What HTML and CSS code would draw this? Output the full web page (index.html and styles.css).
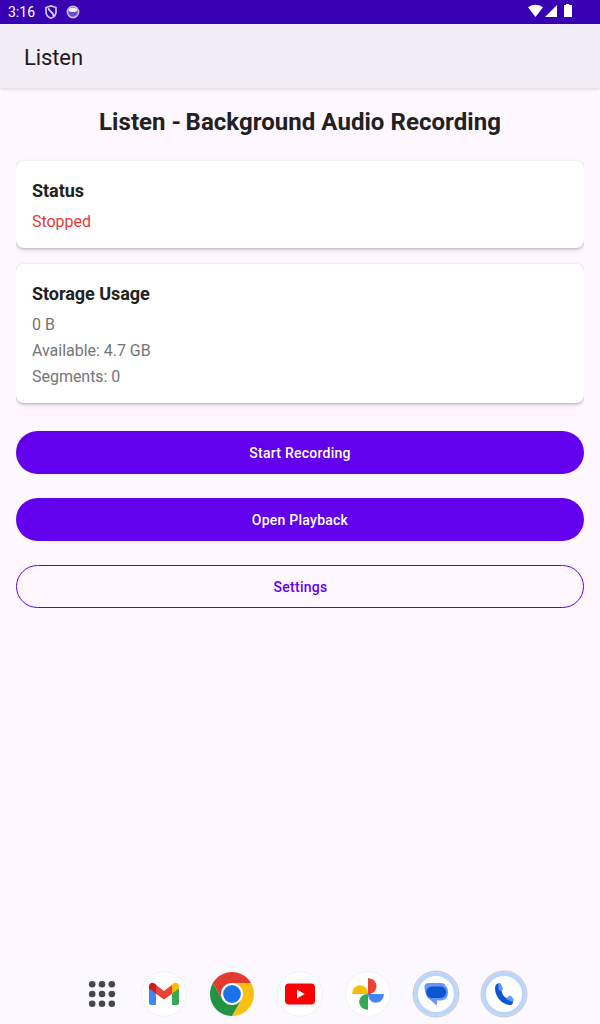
FILE: index.html
```
<!DOCTYPE html>
<html lang="en">
<head>
<meta charset="utf-8">
<title>Listen</title>
<link rel="stylesheet" href="styles.css">
</head>
<body>
<div class="screen">
  <header class="statusbar">
    <span class="clock">3:16</span>
    <svg class="shield" width="12" height="14" viewBox="0 0 12 14"><path d="M6 .9 11 2.500V7c0 2.900-2 5-5 6.200C3 12 1 9.900 1 7V2.500Z" fill="none" stroke="#d3c6ee" stroke-width="1.700"/><path d="M3.600 3C3 7 9 6.500 8.500 11" fill="none" stroke="#d3c6ee" stroke-width="2"/></svg>
    <svg class="face" width="14" height="14" viewBox="0 0 14 14"><circle cx="7" cy="7" r="5.600" fill="#6f4bc9" stroke="#c8b8eb" stroke-width="1.700"/><path d="M3 4Q7 1.500 11 4V6.200Q9 7.400 7 6.800 5 7.400 3 6.200Z" fill="#f4efff"/></svg>
    <svg class="signals" width="46" height="14" viewBox="0 0 46 14"><path d="M0 3.200Q7.500-1.600 15 3.200L7.500 13Z" fill="#fff"/><path d="M29 1V13H17Z" fill="#fff"/><path d="M36 1H38V0H41V1H44V13H36Z" fill="#fff"/></svg>
  </header>
  <div class="appbar">Listen</div>
  <main class="content">
    <h1 class="title">Listen <span class="dash">-</span> Background Audio Recording</h1>
    <div class="card-slot">
      <section class="card">
        <h2 class="card-title">Status</h2>
        <p class="line stopped">Stopped</p>
      </section>
    </div>
    <div class="card-slot">
      <section class="card">
        <h2 class="card-title">Storage Usage</h2>
        <p class="line">0 B</p>
        <p class="line">Available: 4.7 GB</p>
        <p class="line">Segments: 0</p>
      </section>
    </div>
    <div class="actions">
      <button class="btn">Start Recording</button>
      <button class="btn">Open Playback</button>
      <button class="btn outlined">Settings</button>
    </div>
  </main>
  <nav class="dock">
    <svg class="apps" width="28" height="28" viewBox="0 0 28 28" fill="#46464f"><circle cx="4.200" cy="4.200" r="3.300"/><circle cx="14" cy="4.200" r="3.300"/><circle cx="23.800" cy="4.200" r="3.300"/><circle cx="4.200" cy="14" r="3.300"/><circle cx="14" cy="14" r="3.300"/><circle cx="23.800" cy="14" r="3.300"/><circle cx="4.200" cy="23.800" r="3.300"/><circle cx="14" cy="23.800" r="3.300"/><circle cx="23.800" cy="23.800" r="3.300"/></svg>
    <span class="app"><svg width="44" height="44" viewBox="0 0 44 44"><path d="M7 15 14 20V33H9Q7 33 7 31Z" fill="#4285f4"/><path d="M30 20 37 15V31Q37 33 35 33H30Z" fill="#34a853"/><path d="M13.500 12.500 22 19 30.500 12.500V21.500L22 27.500 13.500 21.500Z" fill="#ea4335"/><path d="M7 14.500C7 11 10.500 9.800 13 11.800L14 12.600V21.500L7 16.500Z" fill="#c5221f"/><path d="M37 14.500C37 11 33.500 9.800 31 11.800L30 12.600V21.500L37 16.500Z" fill="#fbbc04"/></svg></span>
    <span class="app"><svg width="44" height="44" viewBox="0 0 44 44"><path d="M22 22 2.950 11A22 22 0 0 1 41.050 11Z" fill="#e33b2e"/><path d="M22 11H41.050A22 22 0 0 1 22 44L31.500 27.500Z" fill="#fcc010"/><path d="M2.950 11A22 22 0 0 0 22 44L31.500 27.500 22 22 12.500 27.500Z" fill="#229342"/><path d="M22 11H2.950L12.500 27.500 22 22Z" fill="#e33b2e"/><circle cx="22" cy="22" r="11" fill="#fff"/><circle cx="22" cy="22" r="8.900" fill="#1a73e8"/></svg></span>
    <span class="app"><svg width="44" height="44" viewBox="0 0 44 44"><rect x="7" y="11.500" width="30" height="21" rx="4" fill="#f00"/><path d="M19 17.500 26.700 22 19 26.500Z" fill="#fff"/></svg></span>
    <span class="app"><svg width="44" height="44" viewBox="0 0 44 44"><path d="M22 6.200C27 6.200 30.500 9.800 30.500 14.200 30.500 18.500 27 22 22 22Z" fill="#ea4335"/><path d="M37.800 22C37.800 27 34.200 30.800 29.800 30.800 25.500 30.800 22 27 22 22Z" fill="#4285f4"/><path d="M22 37.800C17 37.800 13.200 34.200 13.200 29.800 13.200 25.500 17 22 22 22Z" fill="#34a853"/><path d="M6.200 22C6.200 17 9.800 13.200 14.200 13.200 18.500 13.200 22 17 22 22Z" fill="#fbbc04"/></svg></span>
    <span class="app ringed"><svg width="44" height="44" viewBox="0 0 44 44"><path d="M15 11H27Q31 11 31.500 14 34 15.500 34 20.500 34 28 27 28.500H22.800V33.700L16.500 28Q12.500 26 11.500 20.500 8 11 15 11Z" fill="#6594ff"/><rect x="12.200" y="14.500" width="20" height="11.500" rx="5.750" fill="#0b57d0"/></svg></span>
    <span class="app ringed"><svg width="44" height="44" viewBox="0 0 44 44"><path d="M17 11.200Q13 12 13 16C13 25 20 33 29 33Q31 32.500 31.200 29L25 26C21 25 20 21 19.500 18Z" fill="#0b57d0"/><path d="M16.500 11.200Q18.500 10.500 19 12L21 16.500Q21 18 19 19.500L16.500 17ZM24 27 27 23.700Q28 23 29 24L31.500 27Q32.200 28.500 30.500 30Z" fill="#6594ff"/></svg></span>
  </nav>
</div>
</body>
</html>
```
FILE: styles.css
```
* { box-sizing: border-box; }
body { margin: 0; font-family: Roboto, "Liberation Sans", sans-serif; }
.screen {
  width: 600px; height: 1024px; overflow: hidden;
  display: flex; flex-direction: column;
  background: #fef7ff; color: #212121;
}
.statusbar {
  height: 24px; flex: none; display: flex; align-items: center;
  padding: 0 26px 0 8px; background: #3700b3; color: #fff;
}
.clock { width: 37px; font-size: 14px; line-height: 24px; }
.face { margin-left: 9px; }
.signals { margin-left: auto; margin-bottom: 2px; }
.appbar {
  height: 64px; flex: none; padding-left: 24px;
  font-size: 22px; line-height: 67px; letter-spacing: -.1px; color: #1d1b20;
  background: #f3edf7; box-shadow: 0 1px 3px rgba(0,0,0,.16);
}
.content { flex: 1; padding: 16px 0 0; }
.title { margin: 0; font-size: 24px; line-height: 36px; font-weight: 700; letter-spacing: .05px; text-align: center; }
.dash { margin-right: -1.6px; }
.card-slot { margin: 0 16px; padding: 6px 0 10px; overflow: hidden; }
.title + .card-slot { margin-top: 15px; }
.card {
  padding: 17px 16px 13px; border-radius: 8px; background: #fff;
  box-shadow: 0 1px 3px rgba(0,0,0,.25), 0 3px 6px rgba(0,0,0,.07);
}
.card-title { margin: 0 0 5px; font-size: 18px; line-height: 26px; font-weight: 700; letter-spacing: -.04px; }
.line { margin: 0; font-size: 16px; line-height: 26px; letter-spacing: -.03px; color: #757575; }
.line.stopped { color: #e53935; }
.actions { display: flex; flex-direction: column; gap: 24px; margin: 18px 16px 0; }
.btn {
  height: 43px; padding: 1px 0 0; border: 0; border-radius: 22px;
  background: #6200ee; color: #fff;
  font: 500 14px/20px Roboto, "Liberation Sans", sans-serif; letter-spacing: .25px;
}
.btn.outlined { padding: 1px 0 0 1px; border: 1px solid #6200ee; background: transparent; color: #6200ee; }
.dock {
  height: 60px; flex: none; display: flex; align-items: center;
  gap: 24px; padding-left: 88px; background: #fbf8ff;
}
.apps { margin-right: 2px; }
.app { width: 44px; height: 44px; border-radius: 50%; background: #fff; box-shadow: 0 0 2px rgba(0,0,0,.1); }
.app svg { display: block; }
.app.ringed { box-shadow: inset 0 0 0 4px #bad5fb, 0 0 0 1.5px #c9ccdd; }
```
